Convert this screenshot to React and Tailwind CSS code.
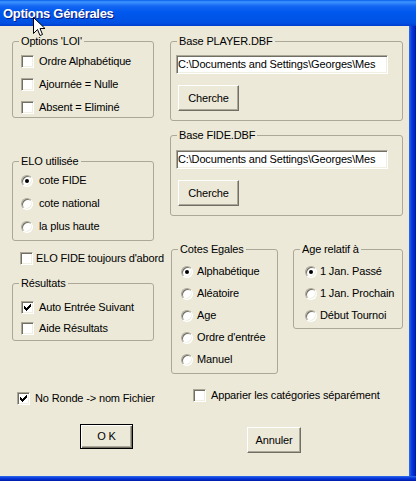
import React from 'react';

// classic XP "Options Générales" dialog

const Box = ({ checked }) => (
    <span className="relative w-[13px] h-[13px] shrink-0 bg-white border border-t-[#ACA899] border-l-[#ACA899] border-r-white border-b-white shadow-[inset_1px_1px_0_#716F64,inset_-1px_-1px_0_#F1EFE2]">
        {checked && (
            <svg className="absolute left-[2px] top-[2px]" width="7" height="7" viewBox="0 0 7 7" shapeRendering="crispEdges">
                <rect x="6" y="0" width="1" height="1" fill="#000" />
                <rect x="5" y="1" width="2" height="1" fill="#000" />
                <rect x="0" y="2" width="1" height="1" fill="#000" />
                <rect x="4" y="2" width="3" height="1" fill="#000" />
                <rect x="0" y="3" width="2" height="1" fill="#000" />
                <rect x="3" y="3" width="3" height="1" fill="#000" />
                <rect x="0" y="4" width="5" height="1" fill="#000" />
                <rect x="1" y="5" width="3" height="1" fill="#000" />
                <rect x="2" y="6" width="1" height="1" fill="#000" />
            </svg>
        )}
    </span>
);

const Radio = ({ on }) => (
    <span className="relative w-[12px] h-[12px] shrink-0 rounded-full bg-white border border-t-[#ACA899] border-l-[#ACA899] border-r-white border-b-white shadow-[inset_1px_1px_0_#716F64,inset_-1px_-1px_0_#F1EFE2]">
        {on && <span className="absolute left-[3px] top-[3px] w-[4px] h-[4px] rounded-full bg-black" />}
    </span>
);

const Opt = ({ radio, on, label, gap = 'gap-[5px]' }) => (
    <div className={`flex items-center h-[13px] leading-[13px] whitespace-nowrap ${gap}`}>
        {radio ? <Radio on={on} /> : <Box checked={on} />}
        <span>{label}</span>
    </div>
);

const Group = ({ label, className, children }) => (
    <fieldset className={`shrink-0 border border-[#ACA899] rounded-[3px] ${className}`}>
        <legend className="ml-[6px] px-[2px] leading-[13px]">{label}</legend>
        {children}
    </fieldset>
);

const Field = () => (
    <div className="ml-[5px] w-[212px] h-[19px] bg-white border border-t-[#ACA899] border-l-[#ACA899] border-r-white border-b-white shadow-[inset_1px_1px_0_#716F64,inset_-1px_-1px_0_#F1EFE2] pl-[1px] leading-[17px] whitespace-nowrap overflow-hidden">
        C:\Documents and Settings\Georges\Mes
    </div>
);

const Btn = ({ children, className }) => (
    <div className={`flex items-center justify-center bg-[#ECE9D8] border border-t-white border-l-white border-r-[#716F64] border-b-[#716F64] shadow-[inset_-1px_-1px_0_#ACA899] ${className}`}>
        {children}
    </div>
);

const DbfGroup = ({ label, className, pad }) => (
    <Group label={label} className={className}>
        <div className={`flex flex-col items-start ${pad}`}>
            <Field />
            <Btn className="ml-[7px] mt-[11px] w-[61px] h-[26px]">Cherche</Btn>
        </div>
    </Group>
);

export default function App() {
    return (
        <div className="relative w-[416px] h-[481px] flex flex-col overflow-hidden font-['Liberation_Sans',Arial,sans-serif] text-[11px] tracking-[-0.15px] text-black">
            {/* title bar */}
            <div className="h-[26px] shrink-0 flex items-center pl-[3px] pt-[2px] bg-[linear-gradient(to_bottom,#0A5FE6_0px,#3D95FF_2px,#1466F2_6px,#0058EE_12px,#0055E8_18px,#0050E2_23px,#003DD0_26px)]">
                <span className="text-[13px] font-bold text-white tracking-[-0.3px] [text-shadow:1px_1px_0_#0a1883]">Options Générales</span>
            </div>

            <div className="flex flex-1 min-h-0">
                <div className="flex-1 bg-[#ECE9D8] pt-[9px] flex flex-col">
                    <div className="flex items-start">
                        {/* left column */}
                        <div className="ml-[12px] w-[142px] flex flex-col">
                            <Group label="Options 'LOI'" className="h-[83px]">
                                <div className="flex flex-col gap-[10px] pt-[7px] pl-[8px]">
                                    <Opt label="Ordre Alphabétique" />
                                    <Opt label="Ajournée = Nulle" />
                                    <Opt label="Absent = Eliminé" />
                                </div>
                            </Group>
                            <Group label="ELO utilisée" className="mt-[37px] h-[86px]">
                                <div className="flex flex-col gap-[10px] pt-[6px] pl-[8px]">
                                    <Opt radio on label="cote FIDE" gap="gap-[6px]" />
                                    <Opt radio label="cote national" gap="gap-[6px]" />
                                    <Opt radio label="la plus haute" gap="gap-[6px]" />
                                </div>
                            </Group>
                            <div className="mt-[11px] ml-[8px]">
                                <Opt label="ELO FIDE toujours d'abord" gap="gap-[3px]" />
                            </div>
                            <Group label="Résultats" className="mt-[12px] h-[64px]">
                                <div className="flex flex-col gap-[8px] pt-[11px] pl-[8px]">
                                    <Opt on label="Auto Entrée Suivant" />
                                    <Opt label="Aide Résultats" />
                                </div>
                            </Group>
                        </div>

                        {/* right column */}
                        <div className="ml-[16px] w-[233px] flex flex-col">
                            <DbfGroup label="Base PLAYER.DBF" className="h-[86px]" pad="pt-[7px]" />
                            <DbfGroup label="Base FIDE.DBF" className="mt-[8px] h-[87px]" pad="pt-[8px]" />
                            <div className="mt-[27px] flex items-start">
                                <Group label="Cotes Egales" className="ml-[1px] w-[107px] h-[131px]">
                                    <div className="flex flex-col gap-[9px] pt-[9px] pl-[9px]">
                                        <Opt radio on label="Alphabétique" gap="gap-[4px]" />
                                        <Opt radio label="Aléatoire" gap="gap-[4px]" />
                                        <Opt radio label="Age" gap="gap-[4px]" />
                                        <Opt radio label="Ordre d'entrée" gap="gap-[4px]" />
                                        <Opt radio label="Manuel" gap="gap-[4px]" />
                                    </div>
                                </Group>
                                <Group label="Age relatif à" className="ml-[15px] w-[110px] h-[86px]">
                                    <div className="flex flex-col gap-[9px] pt-[9px] pl-[11px]">
                                        <Opt radio on label="1 Jan. Passé" gap="gap-[3px]" />
                                        <Opt radio label="1 Jan. Prochain" gap="gap-[3px]" />
                                        <Opt radio label="Début Tournoi" gap="gap-[3px]" />
                                    </div>
                                </Group>
                            </div>
                        </div>
                    </div>

                    <div className="flex items-start">
                        <div className="ml-[17px] w-[176px] mt-[18px]">
                            <Opt on label="No Ronde -> nom Fichier" />
                        </div>
                        <div className="mt-[15px]">
                            <Opt label="Apparier les catégories séparément" />
                        </div>
                    </div>

                    <div className="flex items-start mt-[19px]">
                        <div className="ml-[80px] w-[53px] h-[25px] flex items-center justify-center border border-black shadow-[inset_1px_1px_0_#fff,inset_-1px_-1px_0_#716F64,inset_-2px_-2px_0_#ACA899]">
                            O K
                        </div>
                        <Btn className="ml-[114px] mt-[3px] w-[54px] h-[26px]">Annuler</Btn>
                    </div>
                </div>
                <div className="w-[7px] shrink-0 bg-[linear-gradient(to_right,#2D6DF0,#0A3ADB_40%,#0027C4_80%,#001A9A)]" />
            </div>
            <div className="h-[5px] shrink-0 bg-[linear-gradient(to_bottom,#2D6DF0,#0A3ADB_40%,#0027C4_80%,#001A9A)]" />

            {/* mouse pointer over the caption */}
            <svg className="absolute left-[33px] top-[17px]" width="13" height="20" viewBox="0 0 13 20">
                <path d="M0.5 0.5 L0.5 16.5 L4.5 12.5 L7 18.5 L9.5 17.5 L7 11.5 L12 11.5 Z" fill="#fff" stroke="#000" strokeWidth="1" />
            </svg>
        </div>
    );
}
